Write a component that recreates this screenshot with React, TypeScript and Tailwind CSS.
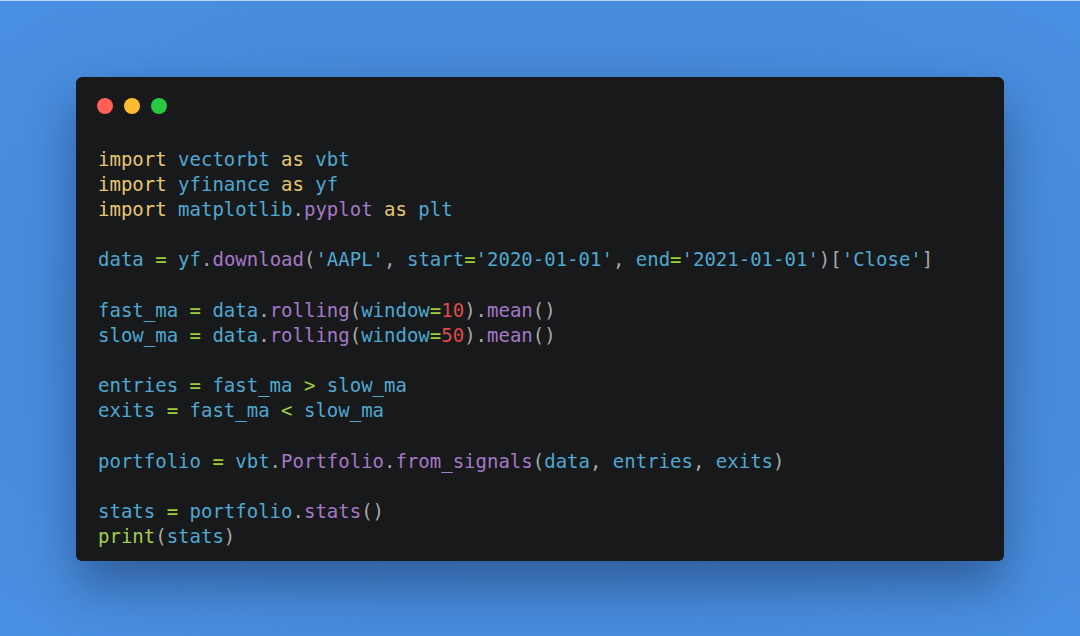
type Tok = [string, string];

const Y = 'text-[#e5c66f]';
const B = 'text-[#4fa8d1]';
const P = 'text-[#a578c6]';
const G = 'text-[#9fcd3c]';
const R = 'text-[#df4949]';
const D = 'text-[#a9a9a9]';
const PG = 'text-[#a4cd4f]';

const lines: Tok[][] = [
  [[Y, 'import'], [B, ' vectorbt '], [Y, 'as'], [B, ' vbt']],
  [[Y, 'import'], [B, ' yfinance '], [Y, 'as'], [B, ' yf']],
  [[Y, 'import'], [B, ' matplotlib'], [D, '.'], [P, 'pyplot'], [B, ' '], [Y, 'as'], [B, ' plt']],
  [],
  [
    [B, 'data '], [G, '='], [B, ' yf'], [D, '.'], [P, 'download'], [D, '('], [B, "'AAPL'"], [D, ', '],
    [B, 'start'], [G, '='], [B, "'2020-01-01'"], [D, ', '], [B, 'end'], [G, '='], [B, "'2021-01-01'"],
    [D, ')['], [B, "'Close'"], [D, ']'],
  ],
  [],
  [[B, 'fast_ma '], [G, '='], [B, ' data'], [D, '.'], [P, 'rolling'], [D, '('], [B, 'window'], [G, '='], [R, '10'], [D, ').'], [P, 'mean'], [D, '()']],
  [[B, 'slow_ma '], [G, '='], [B, ' data'], [D, '.'], [P, 'rolling'], [D, '('], [B, 'window'], [G, '='], [R, '50'], [D, ').'], [P, 'mean'], [D, '()']],
  [],
  [[B, 'entries '], [G, '='], [B, ' fast_ma '], [G, '>'], [B, ' slow_ma']],
  [[B, 'exits '], [G, '='], [B, ' fast_ma '], [G, '<'], [B, ' slow_ma']],
  [],
  [[B, 'portfolio '], [G, '='], [B, ' vbt'], [D, '.'], [P, 'Portfolio'], [D, '.'], [P, 'from_signals'], [D, '('], [B, 'data'], [D, ', '], [B, 'entries'], [D, ', '], [B, 'exits'], [D, ')']],
  [],
  [[B, 'stats '], [G, '='], [B, ' portfolio'], [D, '.'], [P, 'stats'], [D, '()']],
  [[PG, 'print'], [D, '('], [B, 'stats'], [D, ')']],
];

export default function App() {
  return (
    <div className="flex h-[636px] w-[1080px] items-center justify-center border-t border-[#b9d3f2] bg-[radial-gradient(ellipse_at_center,#3f7fc9_0%,#4689d8_55%,#4a90e2_100%)]">
      <div className="flex w-[928px] flex-col rounded-[6px] bg-[#18191b] pb-[11px] pl-[22px] pt-[21px] shadow-[0_24px_48px_rgba(20,40,80,0.45)]">
        <div className="-ml-px flex gap-[11px]">
          <span className="h-4 w-4 rounded-full bg-[#ff5f57]" />
          <span className="h-4 w-4 rounded-full bg-[#febc2e]" />
          <span className="h-4 w-4 rounded-full bg-[#28c840]" />
        </div>
        <pre className="mt-[33px] whitespace-pre font-['DejaVu_Sans_Mono',monospace] text-[19px] leading-[25.2px]">
          {lines.map((line, i) => (
            <div key={i} className="h-[25.2px]">
              {line.map(([c, t], j) => (
                <span key={j} className={c}>
                  {t}
                </span>
              ))}
            </div>
          ))}
        </pre>
      </div>
    </div>
  );
}
